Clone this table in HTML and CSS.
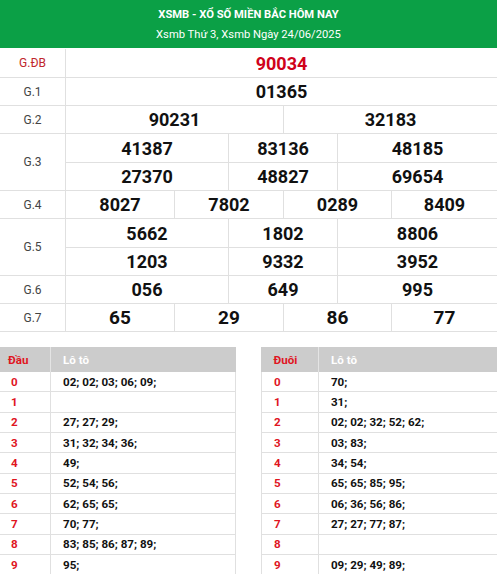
FILE: index.html
```html
<!DOCTYPE html>
<html lang="vi">
<head>
<meta charset="utf-8">
<title>XSMB</title>
<link rel="stylesheet" href="styles.css">
</head>
<body>
<div class="header">
  <div class="title">XSMB - XỔ SỐ MIỀN BẮC HÔM NAY</div>
  <div class="subtitle">Xsmb Thứ 3, Xsmb Ngày 24/06/2025</div>
</div>
<div class="results">
  <div class="row c1">
    <div class="lbl red">G.ĐB</div>
    <div class="num red">90034</div>
  </div>
  <div class="row c1">
    <div class="lbl">G.1</div>
    <div class="num">01365</div>
  </div>
  <div class="row c2">
    <div class="lbl">G.2</div>
    <div class="num">90231</div>
    <div class="num">32183</div>
  </div>
  <div class="row c3 r2">
    <div class="lbl">G.3</div>
    <div class="num">41387</div>
    <div class="num">83136</div>
    <div class="num">48185</div>
    <div class="num">27370</div>
    <div class="num">48827</div>
    <div class="num">69654</div>
  </div>
  <div class="row c4">
    <div class="lbl">G.4</div>
    <div class="num">8027</div>
    <div class="num">7802</div>
    <div class="num">0289</div>
    <div class="num">8409</div>
  </div>
  <div class="row c3 r2">
    <div class="lbl">G.5</div>
    <div class="num">5662</div>
    <div class="num">1802</div>
    <div class="num">8806</div>
    <div class="num">1203</div>
    <div class="num">9332</div>
    <div class="num">3952</div>
  </div>
  <div class="row c3">
    <div class="lbl">G.6</div>
    <div class="num">056</div>
    <div class="num">649</div>
    <div class="num">995</div>
  </div>
  <div class="row c4">
    <div class="lbl">G.7</div>
    <div class="num big">65</div>
    <div class="num big">29</div>
    <div class="num big">86</div>
    <div class="num big">77</div>
  </div>
</div>

<div class="loto">
  <table class="lt left">
    <tr><th class="k">Đầu</th><th>Lô tô</th></tr>
    <tr><td class="k">0</td><td>02; 02; 03; 06; 09;</td></tr>
    <tr><td class="k">1</td><td></td></tr>
    <tr><td class="k">2</td><td>27; 27; 29;</td></tr>
    <tr><td class="k">3</td><td>31; 32; 34; 36;</td></tr>
    <tr><td class="k">4</td><td>49;</td></tr>
    <tr><td class="k">5</td><td>52; 54; 56;</td></tr>
    <tr><td class="k">6</td><td>62; 65; 65;</td></tr>
    <tr><td class="k">7</td><td>70; 77;</td></tr>
    <tr><td class="k">8</td><td>83; 85; 86; 87; 89;</td></tr>
    <tr><td class="k">9</td><td>95;</td></tr>
  </table>
  <table class="lt right">
    <tr><th class="k">Đuôi</th><th>Lô tô</th></tr>
    <tr><td class="k">0</td><td>70;</td></tr>
    <tr><td class="k">1</td><td>31;</td></tr>
    <tr><td class="k">2</td><td>02; 02; 32; 52; 62;</td></tr>
    <tr><td class="k">3</td><td>03; 83;</td></tr>
    <tr><td class="k">4</td><td>34; 54;</td></tr>
    <tr><td class="k">5</td><td>65; 65; 85; 95;</td></tr>
    <tr><td class="k">6</td><td>06; 36; 56; 86;</td></tr>
    <tr><td class="k">7</td><td>27; 27; 77; 87;</td></tr>
    <tr><td class="k">8</td><td></td></tr>
    <tr><td class="k">9</td><td>09; 29; 49; 89;</td></tr>
  </table>
</div>
</body>
</html>
```

FILE: styles.css
```css
html, body {
  margin: 0;
  padding: 0;
  background: #fff;
}
body {
  font-family: Roboto, "Liberation Sans", Arial, sans-serif;
  color: #111;
}
.header {
  background: #0ba046;
  color: #fff;
  text-align: center;
  height: 48px;
  box-sizing: border-box;
  padding-top: 7px;
  margin-bottom: 1px;
}
.title {
  font-weight: bold;
  font-size: 11.2px;
  line-height: 16px;
}
.subtitle {
  font-size: 11.2px;
  line-height: 16px;
  margin-top: 4px;
}
.results {
  border-bottom: 1px solid #e0e0e0;
}
.row {
  display: grid;
  border-top: 1px solid #e0e0e0;
  grid-auto-rows: 27px;
}
.row:first-child { border-top: none; grid-auto-rows: 28px; }
.c1 { grid-template-columns: 66px 1fr; }
.c2 { grid-template-columns: 66px 217px 1fr; }
.c3 { grid-template-columns: 66px 162px 109px 1fr; }
.c4 { grid-template-columns: 66px 108px 109px 108px 1fr; }
.r2 { grid-template-rows: 28px 28px; }
.r2 .lbl { grid-row: 1 / span 2; }
.r2 .num:nth-child(n+5) { border-top: 1px solid #e0e0e0; }
.row > div + div { border-left: 1px solid #e0e0e0; }
.lbl {
  display: flex;
  align-items: center;
  justify-content: center;
  font-size: 12px;
  color: #444;
  border-right: 1px solid #e0e0e0;
}
.row > .lbl + .num { border-left: none; }
.r2 > .num:nth-child(5) { border-left: none; }
.num {
  display: flex;
  align-items: center;
  justify-content: center;
  font-size: 18px;
  font-weight: bold;
  color: #111;
}
.num.big { font-size: 19px; }
.lbl.red { color: #c0262c; }
.num.red { color: #d0021b; }

.loto {
  display: flex;
  justify-content: space-between;
  margin-top: 15px;
}
.lt {
  width: 47.5%;
  border-collapse: collapse;
  font-family: Roboto, "Liberation Sans", sans-serif;
  font-size: 11.6px;
}
.lt th {
  background: #cccccc;
  color: #fff;
  text-align: left;
  font-weight: bold;
  height: 25px;
  padding: 0 12px;
  border-left: 1px solid #e4e4e4;
}
.lt th.k { color: #e0151f; border-left: none; }
.lt td {
  height: 19.33px;
  padding: 0 12px;
  border-top: 1px solid #e0e0e0;
  border-left: 1px solid #e0e0e0;
  font-weight: bold;
  color: #111;
}
.lt tr:nth-child(2) td { border-top: none; }
.lt td.k { color: #e0151f; }
.lt td:last-child { border-right: 1px solid #e0e0e0; }
.lt.left th.k { border-left: none; width: 34px; padding: 0 8px; }
.lt.left td.k { border-left: none; padding-left: 11px; padding-right: 8px; width: 31px; }
.lt.right th.k, .lt.right td.k { width: 32px; padding-left: 12px; }
.lt.right td:last-child { border-right: none; }
```
